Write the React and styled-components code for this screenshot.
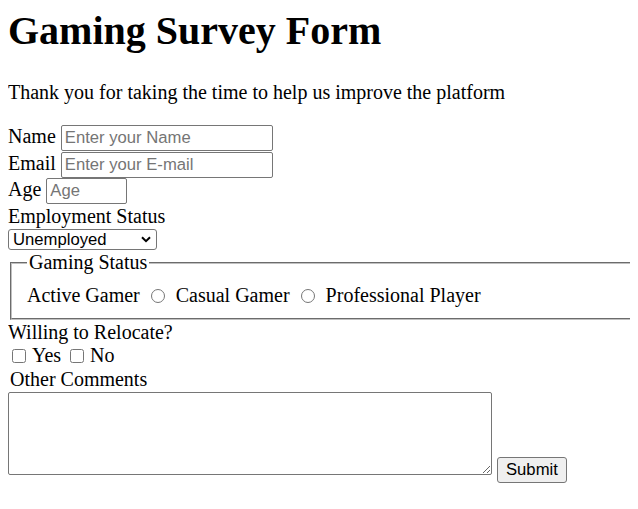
import React from "react";
import styled, { createGlobalStyle } from "styled-components";

const GlobalStyle = createGlobalStyle`
  body {
    margin: 8px;
    font-family: "Liberation Serif", "Times New Roman", serif;
    font-size: 20px;
    color: #000;
    background: #fff;
  }
`;

const Page = styled.main`
  display: block;
  margin-right: -8px;
  overflow: hidden;
`;

const Title = styled.h1`
  font-size: 40px;
  font-weight: bold;
  line-height: 46px;
  margin: 0 0 27px;
`;

const Intro = styled.p`
  margin: 0 0 21px;
  line-height: 23px;
`;

const Form = styled.form`
  display: block;
`;

const FieldRow = styled.div`
  display: flex;
  align-items: baseline;
  gap: 5px;
  height: 26.5px;
`;

const FieldLabel = styled.label`
  line-height: 23px;
`;

const controlFont = `
  font-family: "Liberation Sans", Arial, sans-serif;
  font-size: 16.67px;
`;

const TextInput = styled.input`
  ${controlFont}
  box-sizing: border-box;
  width: ${(p) => p.$width}px;
  height: 26px;
  padding: 1px 3px;
  border: 1px solid #767676;
  border-radius: 2px;
  color: #000;
  &::placeholder { color: #757575; }
`;

const BlockLabel = styled.label`
  display: block;
  line-height: 23px;
  margin-top: ${(p) => p.$gap || 0}px;
  padding-left: ${(p) => (p.$indent ? 2 : 0)}px;
`;

const SelectWrap = styled.div`
  position: relative;
  width: 149px;
  height: 21px;
  margin: 1.5px 0 1px;
`;

const Select = styled.select`
  ${controlFont}
  appearance: none;
  -webkit-appearance: none;
  box-sizing: border-box;
  display: block;
  width: 100%;
  height: 100%;
  margin: 0;
  padding: 0 20px 0 4px;
  border: 1px solid #767676;
  border-radius: 3px;
  background: #fff;
  color: #000;
  line-height: 19px;
`;

const Chevron = styled.svg`
  position: absolute;
  right: 6px;
  top: 7px;
  width: 10px;
  height: 7px;
  pointer-events: none;
`;

const Group = styled.fieldset`
  display: block;
  margin: 0 -20px 0 2px;
  padding: 10px 15px 11px;
  border: 2px groove rgb(192, 192, 192);
`;

const Legend = styled.legend`
  padding: 0 2px;
  line-height: 23px;
`;

const Options = styled.div`
  display: flex;
  align-items: center;
  height: 23px;
  gap: 5px;
`;

const OptionText = styled.label`
  line-height: 23px;
`;

const Radio = styled.input.attrs({ type: "radio" })`
  width: 14px;
  height: 14px;
  margin: 0 6px;
`;

const Checks = styled.div`
  display: flex;
  align-items: center;
  height: 23px;
  gap: 5px;
`;

const CheckItem = styled.label`
  display: flex;
  align-items: center;
  line-height: 23px;
`;

const Checkbox = styled.input.attrs({ type: "checkbox" })`
  width: 14px;
  height: 14px;
  margin: 0 6px 0 4px;
`;

const CommentsRow = styled.div`
  display: block;
  line-height: 23px;
  padding-bottom: 4px;
`;

const Comments = styled.textarea`
  ${controlFont}
  display: inline-block;
  vertical-align: baseline;
  box-sizing: border-box;
  width: 484px;
  height: 83px;
  margin: 1px 0 0;
  padding: 2px;
  border: 1px solid #767676;
  border-radius: 2px;
  background: #fff;
`;

const SubmitButton = styled.button`
  ${controlFont}
  vertical-align: baseline;
  box-sizing: border-box;
  height: 26px;
  margin-left: 5px;
  padding: 1px 8px;
  border: 1px solid #767676;
  border-radius: 3px;
  background: #efefef;
  color: #000;
`;

const gamingOptions = ["Active Gamer", "Casual Gamer", "Professional Player"];

export default function App() {
  return (
    <Page>
      <GlobalStyle />
      <Title>Gaming Survey Form</Title>
      <Intro>Thank you for taking the time to help us improve the platform</Intro>
      <Form onSubmit={(e) => e.preventDefault()}>
        <FieldRow>
          <FieldLabel htmlFor="name">Name</FieldLabel>
          <TextInput id="name" $width={212} placeholder="Enter your Name" />
        </FieldRow>
        <FieldRow>
          <FieldLabel htmlFor="email">Email</FieldLabel>
          <TextInput id="email" $width={212} placeholder="Enter your E-mail" />
        </FieldRow>
        <FieldRow>
          <FieldLabel htmlFor="age">Age</FieldLabel>
          <TextInput id="age" $width={81} placeholder="Age" />
        </FieldRow>
        <BlockLabel htmlFor="employment">Employment Status</BlockLabel>
        <SelectWrap>
          <Select id="employment" defaultValue="Unemployed">
            <option>Unemployed</option>
            <option>Employed</option>
            <option>Student</option>
          </Select>
          <Chevron viewBox="0 0 10 7" aria-hidden="true">
            <polyline points="1,1.2 5,5.2 9,1.2" fill="none" stroke="#000" strokeWidth="2" />
          </Chevron>
        </SelectWrap>
        <Group>
          <Legend>Gaming Status</Legend>
          <Options>
            {gamingOptions.map((opt, i) => (
              <React.Fragment key={opt}>
                <OptionText htmlFor={`g${i}`}>{opt}</OptionText>
                {i < gamingOptions.length - 1 && <Radio id={`g${i}`} name="gaming" />}
              </React.Fragment>
            ))}
          </Options>
        </Group>
        <BlockLabel $gap={1}>Willing to Relocate?</BlockLabel>
        <Checks>
          <CheckItem>
            <Checkbox />
            Yes
          </CheckItem>
          <CheckItem>
            <Checkbox />
            No
          </CheckItem>
        </Checks>
        <BlockLabel $indent $gap={1} htmlFor="comments">Other Comments</BlockLabel>
        <CommentsRow>
          <Comments id="comments" />
          <SubmitButton type="submit">Submit</SubmitButton>
        </CommentsRow>
      </Form>
    </Page>
  );
}
